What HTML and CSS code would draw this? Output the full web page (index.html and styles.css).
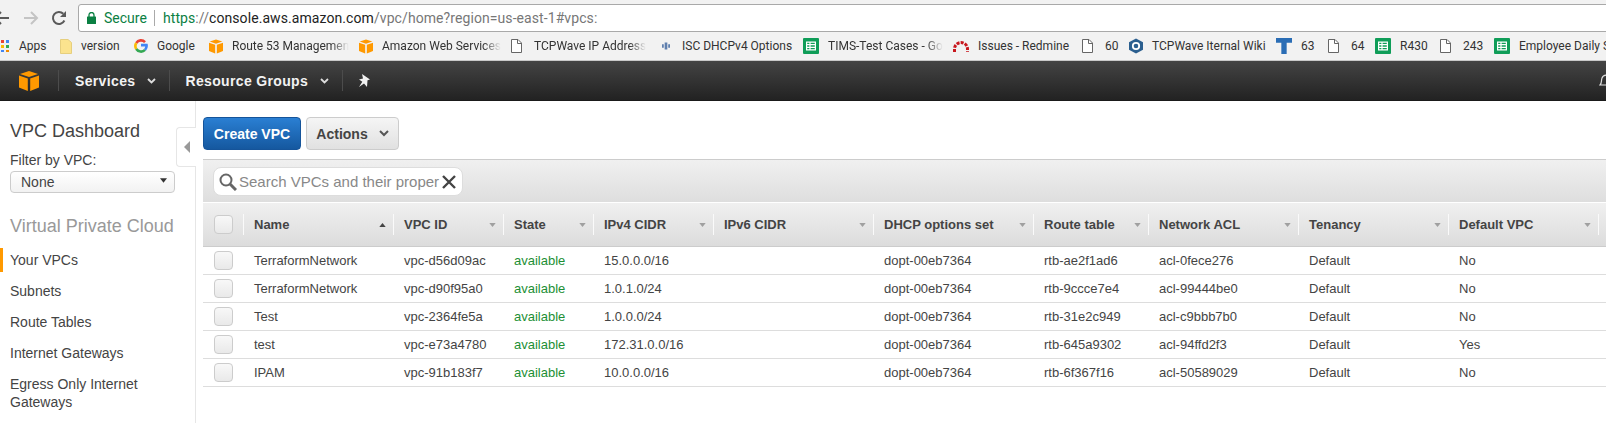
FILE: index.html
```html
<!DOCTYPE html>
<html lang="en">
<head>
<meta charset="utf-8">
<title>VPC Management Console</title>
<link rel="stylesheet" href="styles.css">
</head>
<body>
<svg class="defs" width="0" height="0" aria-hidden="true">
  <defs>
    <symbol id="cube" viewBox="0 0 20 20">
      <path fill="#f90" d="M10 0l9 3-9 3-9-3z"/>
      <path fill="#f90" d="M0 4.500l8.800 3V20L0 16.500z"/>
      <path fill="#f90" d="M20 4.500l-8.800 3V20l8.800-3.500z"/>
    </symbol>
    <symbol id="doc" viewBox="0 0 11 14">
      <path fill="#fff" stroke="#666" d="M.5.500h6.500l3.500 3.500v9.500h-10z"/>
      <path fill="none" stroke="#666" d="M6.500.500v4h4"/>
    </symbol>
    <symbol id="sheet" viewBox="0 0 16 16">
      <rect width="16" height="16" rx="1" fill="#0f9d58"/>
      <path fill="none" stroke="#fff" stroke-width="1.200" d="M3.600 4.100h8.800v7.800H3.600zM3.600 6.700h8.800M3.600 9.300h8.800M7 4.100v7.800"/>
    </symbol>
    <symbol id="tri" viewBox="0 0 8 5">
      <path d="M0 0h8L4 5z"/>
    </symbol>
  </defs>
</svg>

<div class="toolbar">
  <svg class="nav-icon" width="10" height="16" viewBox="0 0 10 16"><path fill="none" stroke="#5a5a5a" stroke-width="2" d="M-4 8h13M1 2L-5 8l6 6"/></svg>
  <svg class="nav-icon fwd" width="16" height="16" viewBox="0 0 16 16"><path fill="none" stroke="#c4c4c4" stroke-width="2" d="M1 8h13M8 2l6 6-6 6"/></svg>
  <svg class="nav-icon reload" width="16" height="16" viewBox="0 0 16 16"><path fill="none" stroke="#5a5a5a" stroke-width="2" d="M13.400 10.500A6 6 0 1 1 12.300 3.800"/><path fill="#5a5a5a" d="M15 1v6H9z"/></svg>
  <div class="omnibox">
    <svg class="lock" width="9" height="12" viewBox="0 0 9 12"><path fill="none" stroke="#0b8043" stroke-width="1.300" d="M2 5V3a2.500 2.500 0 0 1 5 0v2"/><rect y="4.500" width="9" height="7.500" rx=".5" fill="#0b8043"/></svg>
    <span class="secure">Secure</span>
    <span class="url"><span class="scheme">https</span>://<span class="host">console.aws.amazon.com</span>/vpc/home?region=us-east-1#vpcs:</span>
  </div>
</div>

<div class="bookmarks">
  <div class="bm"><svg class="apps" width="8" height="12" viewBox="0 0 8 12"><path fill="#ea4335" d="M0 0h3v3H0z"/><path fill="#4285f4" d="M5 0h3v3H5z"/><path fill="#fbbc05" d="M0 5h3v3H0z"/><path fill="#34a853" d="M5 5h3v3H5z"/><path fill="#4285f4" d="M0 10h3v2H0z"/><path fill="#f28b00" d="M5 10h3v2H5z"/></svg><span class="bm-t">Apps</span></div>
  <div class="bm"><svg width="12" height="15" viewBox="0 0 12 15"><path fill="#fbe38e" stroke="#e6cf7e" d="M.5.500h7.500l3.500 3v11h-11z"/></svg><span class="bm-t">version</span></div>
  <div class="bm"><svg width="14" height="14" viewBox="0 0 16 16"><path fill="none" stroke="#ea4335" stroke-width="3" d="M2.600 4.600A6.400 6.400 0 0 1 12.600 3.500"/><path fill="none" stroke="#fbbc05" stroke-width="3" d="M2.600 4.600a6.400 6.400 0 0 0 0 6.800"/><path fill="none" stroke="#34a853" stroke-width="3" d="M2.600 11.400a6.400 6.400 0 0 0 10 1"/><path fill="none" stroke="#4285f4" stroke-width="3" d="M12.600 12.400A6.400 6.400 0 0 0 14.300 7H8"/></svg><span class="bm-t">Google</span></div>
  <div class="bm"><svg width="14" height="15"><use href="#cube"/></svg><span class="bm-t fade">Route 53 Managemen</span></div>
  <div class="bm"><svg width="14" height="15"><use href="#cube"/></svg><span class="bm-t fade">Amazon Web Services</span></div>
  <div class="bm"><svg width="11" height="14"><use href="#doc"/></svg><span class="bm-t doc-t fade">TCPWave IP Address</span></div>
  <div class="bm"><svg class="isc" width="8" height="8" viewBox="0 0 9 8"><path fill="#5f7fae" d="M0 2h2v4H0zM3 0h3v8H3zM7 2h2v4H7z"/></svg><span class="bm-t doc-t">ISC DHCPv4 Options</span></div>
  <div class="bm"><svg width="16" height="16"><use href="#sheet"/></svg><span class="bm-t fade">TIMS-Test Cases - Go</span></div>
  <div class="bm"><svg width="16" height="12" viewBox="0 0 16 12"><path fill="none" stroke="#c8161d" stroke-width="3" stroke-dasharray="3 1.200" d="M1.500 12V9a6.500 6.500 0 0 1 13 0v3"/></svg><span class="bm-t">Issues - Redmine</span></div>
  <div class="bm"><svg width="11" height="14"><use href="#doc"/></svg><span class="bm-t doc-t">60</span></div>
  <div class="bm"><svg width="14" height="16" viewBox="0 0 14 15"><path fill="#2b5f8f" d="M7 0l7 3.800v7.400L7 15l-7-3.800V3.800z"/><circle cx="7" cy="7.500" r="3.200" fill="none" stroke="#fff" stroke-width="1.800"/></svg><span class="bm-t">TCPWave Iternal Wiki</span></div>
  <div class="bm"><svg width="16" height="16" viewBox="0 0 15 15"><path fill="#2a6db5" d="M0 0h15v4.500h-5V15H5V4.500H0z"/></svg><span class="bm-t">63</span></div>
  <div class="bm"><svg width="11" height="14"><use href="#doc"/></svg><span class="bm-t doc-t">64</span></div>
  <div class="bm"><svg width="16" height="16"><use href="#sheet"/></svg><span class="bm-t">R430</span></div>
  <div class="bm"><svg width="11" height="14"><use href="#doc"/></svg><span class="bm-t doc-t">243</span></div>
  <div class="bm"><svg width="16" height="16"><use href="#sheet"/></svg><span class="bm-t">Employee Daily S</span></div>
</div>

<header class="topnav">
  <svg class="logo" width="20" height="20"><use href="#cube"/></svg>
  <span class="nav-sep sep-a"></span>
  <span class="nav-item services">Services</span>
  <svg class="chev" width="9" height="6" viewBox="0 0 9 6"><path fill="none" stroke="#ddd" stroke-width="1.800" d="M1 1l3.500 3.500L8 1"/></svg>
  <span class="nav-sep sep-b"></span>
  <span class="nav-item groups">Resource Groups</span>
  <svg class="chev" width="9" height="6" viewBox="0 0 9 6"><path fill="none" stroke="#ddd" stroke-width="1.800" d="M1 1l3.500 3.500L8 1"/></svg>
  <span class="nav-sep sep-c"></span>
  <svg class="pin" width="13" height="13" viewBox="0 0 13 13"><path fill="#f2f2f2" d="M5 0l8 5.500-2.500.8-.5 6.700-3-3.500L2 13l3.300-5.300L2 5.500l4-1z"/></svg>
  <svg class="bell" width="12" height="15" viewBox="0 0 12 15"><path fill="none" stroke="#ddd" stroke-width="1.200" d="M1 12c2-2 1-4 2-7 .8-2.500 3-3 5-3v10z"/></svg>
</header>

<div class="main">
  <aside class="sidebar">
    <h2 class="side-title">VPC Dashboard</h2>
    <label class="filter-label">Filter by VPC:</label>
    <div class="select">None<svg class="sel-tri" width="7" height="5"><use href="#tri"/></svg></div>
    <h3 class="side-head">Virtual Private Cloud</h3>
    <ul class="side-menu">
      <li class="active">Your VPCs</li>
      <li>Subnets</li>
      <li>Route Tables</li>
      <li>Internet Gateways</li>
      <li>Egress Only Internet Gateways</li>
    </ul>
    <div class="collapse"><svg width="6" height="12" viewBox="0 0 6 12"><path fill="#999" d="M6 0v12L0 6z"/></svg></div>
  </aside>

  <section class="content">
    <div class="actions">
      <button class="btn primary">Create VPC</button>
      <button class="btn secondary">Actions<svg width="10" height="7" viewBox="0 0 10 7"><path fill="none" stroke="#555" stroke-width="2" d="M1 1l4 4 4-4"/></svg></button>
    </div>
    <div class="searchbar">
      <div class="searchbox">
        <svg class="mag" width="18" height="18" viewBox="0 0 18 18"><circle cx="7" cy="7" r="5.500" fill="none" stroke="#666" stroke-width="2"/><path stroke="#666" stroke-width="3" d="M11 11l6 6"/></svg>
        <span class="placeholder">Search VPCs and their proper</span>
        <svg class="clear" width="14" height="14" viewBox="0 0 14 14"><path stroke="#444" stroke-width="2.400" d="M1 1l12 12M13 1L1 13"/></svg>
      </div>
    </div>
    <table class="vpcs">
      <colgroup>
        <col class="c0"><col class="c1"><col class="c2"><col class="c3"><col class="c4"><col class="c5"><col class="c6"><col class="c7"><col class="c8"><col class="c9"><col class="c10"><col>
      </colgroup>
      <thead>
        <tr>
          <th><div class="th first"><span class="check"></span></div></th>
          <th><div class="th">Name<svg class="sort up" width="7" height="4"><use href="#tri"/></svg></div></th>
          <th><div class="th">VPC ID<svg class="sort" width="7" height="4"><use href="#tri"/></svg></div></th>
          <th><div class="th">State<svg class="sort" width="7" height="4"><use href="#tri"/></svg></div></th>
          <th><div class="th">IPv4 CIDR<svg class="sort" width="7" height="4"><use href="#tri"/></svg></div></th>
          <th><div class="th">IPv6 CIDR<svg class="sort" width="7" height="4"><use href="#tri"/></svg></div></th>
          <th><div class="th">DHCP options set<svg class="sort" width="7" height="4"><use href="#tri"/></svg></div></th>
          <th><div class="th">Route table<svg class="sort" width="7" height="4"><use href="#tri"/></svg></div></th>
          <th><div class="th">Network ACL<svg class="sort" width="7" height="4"><use href="#tri"/></svg></div></th>
          <th><div class="th">Tenancy<svg class="sort" width="7" height="4"><use href="#tri"/></svg></div></th>
          <th><div class="th">Default VPC<svg class="sort" width="7" height="4"><use href="#tri"/></svg></div></th>
          <th></th>
        </tr>
      </thead>
      <tbody>
        <tr><td><span class="check"></span></td><td>TerraformNetwork</td><td>vpc-d56d09ac</td><td class="ok">available</td><td>15.0.0.0/16</td><td></td><td>dopt-00eb7364</td><td>rtb-ae2f1ad6</td><td>acl-0fece276</td><td>Default</td><td>No</td><td></td></tr>
        <tr><td><span class="check"></span></td><td>TerraformNetwork</td><td>vpc-d90f95a0</td><td class="ok">available</td><td>1.0.1.0/24</td><td></td><td>dopt-00eb7364</td><td>rtb-9ccce7e4</td><td>acl-99444be0</td><td>Default</td><td>No</td><td></td></tr>
        <tr><td><span class="check"></span></td><td>Test</td><td>vpc-2364fe5a</td><td class="ok">available</td><td>1.0.0.0/24</td><td></td><td>dopt-00eb7364</td><td>rtb-31e2c949</td><td>acl-c9bbb7b0</td><td>Default</td><td>No</td><td></td></tr>
        <tr><td><span class="check"></span></td><td>test</td><td>vpc-e73a4780</td><td class="ok">available</td><td>172.31.0.0/16</td><td></td><td>dopt-00eb7364</td><td>rtb-645a9302</td><td>acl-94ffd2f3</td><td>Default</td><td>Yes</td><td></td></tr>
        <tr><td><span class="check"></span></td><td>IPAM</td><td>vpc-91b183f7</td><td class="ok">available</td><td>10.0.0.0/16</td><td></td><td>dopt-00eb7364</td><td>rtb-6f367f16</td><td>acl-50589029</td><td>Default</td><td>No</td><td></td></tr>
      </tbody>
    </table>
  </section>
</div>
</body>
</html>
```
FILE: styles.css
```css
* { box-sizing: border-box; }
html, body { margin: 0; padding: 0; }
body {
  width: 1606px;
  height: 423px;
  overflow: hidden;
  background: #fff;
  font-family: "Liberation Sans", Arial, sans-serif;
  color: #444;
}
.defs { display: block; height: 0; }

/* browser toolbar */
.toolbar {
  height: 32px;
  background: #f2f2f2;
  display: flex;
  align-items: center;
  padding-top: 4px;
}
.nav-icon { flex: none; margin-top: -1px; }
.fwd { margin-left: 13px; }
.reload { margin-left: 12px; }
.omnibox {
  flex: 1;
  height: 28px;
  margin-left: 11px;
  margin-right: -4px;
  background: #fff;
  border: 1px solid #a9a9a9;
  border-radius: 3px;
  display: flex;
  align-items: center;
  font-family: Roboto, sans-serif;
  font-size: 14px;
  color: #777;
}
.lock { margin-left: 8px; flex: none; }
.secure {
  margin-left: 8px;
  width: 51px;
  color: #0b8043;
  border-right: 1px solid #aaa;
  line-height: 16px;
}
.url { margin-left: 8px; letter-spacing: .08px; white-space: nowrap; }
.scheme { color: #0b8043; }
.host { color: #222; }

/* bookmarks bar */
.bookmarks {
  height: 29px;
  background: #f2f2f2;
  border-bottom: 1px solid #c9c9c9;
  padding-left: 1px;
  display: grid;
  grid-template-columns: 59px 74px 75px 150px 152px 151px 141px 150px 129px 47px 147px 52px 47px 65px 54px 112px;
  align-items: center;
  font-family: Roboto, sans-serif;
  font-size: 12px;
  color: #333;
  white-space: nowrap;
}
.bm { display: flex; align-items: center; min-width: 0; }
.bm svg { flex: none; }
.bm-t { margin-left: 9px; }
.apps { margin-right: 1px; }
.bm-t.doc-t { margin-left: 12px; }
.fade {
  -webkit-mask-image: linear-gradient(90deg, #000 85%, transparent);
  mask-image: linear-gradient(90deg, #000 85%, transparent);
}

/* console navigation */
.topnav {
  height: 40px;
  background: linear-gradient(#444, #222);
  border-bottom: 1px solid #1a1a1a;
  display: flex;
  align-items: center;
  color: #f2f2f2;
  font-weight: 700;
  font-size: 14px;
  letter-spacing: .35px;
}
.logo { margin-left: 19px; flex: none; }
.nav-sep { width: 1px; height: 21px; background: #4c4c4c; flex: none; }
.sep-a { margin-left: 19px; }
.services { margin-left: 16px; }
.chev { margin-left: 12px; flex: none; }
.topnav .chev + .sep-b { margin-left: 13px; }
.groups { margin-left: 15px; }
.topnav .chev + .sep-c { margin-left: 13px; }
.pin { margin-left: 14px; flex: none; }
.bell { margin-left: auto; margin-right: -5px; flex: none; }

/* page */
.main { display: flex; height: 322px; }
.sidebar {
  position: relative;
  width: 196px;
  flex: none;
  border-right: 1px solid #e6e6e6;
  padding: 20px 0 0 10px;
}
.side-title {
  margin: 0;
  font-size: 18px;
  font-weight: 400;
  line-height: 20px;
  color: #444;
}
.filter-label {
  display: block;
  margin-top: 11px;
  font-size: 14px;
  line-height: 16px;
  color: #444;
}
.select {
  width: 165px;
  height: 22px;
  margin-top: 3px;
  padding-left: 10px;
  border: 1px solid #ccc;
  border-radius: 4px;
  background: linear-gradient(#fff, #f2f2f2);
  display: flex;
  align-items: center;
  justify-content: space-between;
  font-size: 14px;
  color: #444;
}
.sel-tri { margin-right: 7px; margin-top: -3px; fill: #333; }
.side-head {
  margin: 23px 0 0;
  font-size: 18px;
  font-weight: 400;
  line-height: 20px;
  color: #999;
}
.side-menu {
  list-style: none;
  margin: 12px 0 0 -10px;
  padding: 0;
  font-size: 14px;
  line-height: 18px;
  color: #444;
}
.side-menu li { padding: 3px 40px 10px 10px; }
.side-menu .active { border-left: 3px solid #f90; padding-left: 7px; padding-bottom: 3px; margin-bottom: 7px; }
.collapse {
  position: absolute;
  top: 26px;
  right: -1px;
  width: 20px;
  height: 40px;
  background: #fff;
  border: 1px solid #e6e6e6;
  border-right: 0;
  border-radius: 4px 0 0 4px;
  display: flex;
  align-items: center;
  padding-left: 7px;
}

.content { flex: 1; min-width: 0; padding-left: 7px; }
.actions { display: flex; gap: 5px; padding-top: 16px; height: 58px; }
.btn {
  height: 33px;
  border-radius: 4px;
  font-family: "Liberation Sans", Arial, sans-serif;
  font-size: 14px;
  font-weight: 700;
  padding: 0;
}
.primary {
  width: 98px;
  color: #fff;
  border: 1px solid #15549a;
  background: linear-gradient(#2a7fd3, #15589f);
}
.secondary {
  width: 93px;
  color: #444;
  border: 1px solid #ccc;
  background: linear-gradient(#f5f5f5, #e1e1e1);
  display: flex;
  align-items: center;
  justify-content: center;
  gap: 11px;
}

.searchbar {
  height: 44px;
  border-top: 1px solid #ccc;
  border-bottom: 1px solid #fff;
  background: linear-gradient(#f0f0f0, #dedede);
  padding: 7px 0 0 10px;
}
.searchbox {
  width: 250px;
  height: 29px;
  background: #fff;
  border: 1px solid #ddd;
  border-radius: 8px;
  display: flex;
  align-items: center;
  padding-left: 5px;
}
.mag { flex: none; }
.placeholder {
  width: 198px;
  margin-left: 2px;
  white-space: nowrap;
  font-size: 15px;
  color: #888;
}
.clear { flex: none; margin-left: 5px; }

.vpcs {
  width: 1403px;
  table-layout: fixed;
  border-collapse: separate;
  border-spacing: 0;
  font-size: 13px;
  color: #444;
}
.c0 { width: 41px; }
.c1 { width: 150px; }
.c2 { width: 110px; }
.c3 { width: 90px; }
.c4 { width: 120px; }
.c5 { width: 160px; }
.c6 { width: 160px; }
.c7 { width: 115px; }
.c8 { width: 150px; }
.c9 { width: 150px; }
.c10 { width: 150px; }
.vpcs th {
  height: 44px;
  padding: 0;
  background: linear-gradient(#f0f0f0, #dcdcdc);
  border-bottom: 1px solid #ccc;
  font-weight: 700;
  text-align: left;
}
.th {
  height: 21px;
  padding: 0 7px 0 10px;
  border-right: 1px solid #fafafa;
  display: flex;
  align-items: center;
  justify-content: space-between;
}
.th.first { padding-left: 11px; }
.sort { flex: none; fill: #a0a0a0; }
.sort.up { transform: rotate(180deg); fill: #444; }
.vpcs td {
  height: 28px;
  padding: 0 0 0 10px;
  border-bottom: 1px solid #ddd;
  white-space: nowrap;
}
.vpcs td:first-child { padding-left: 11px; }
.vpcs .ok { color: #1d8f35; }
.check {
  display: block;
  width: 19px;
  height: 19px;
  border: 1px solid #ccc;
  border-radius: 4px;
  background: linear-gradient(#f8f8f8, #e9e9e9);
}
```
